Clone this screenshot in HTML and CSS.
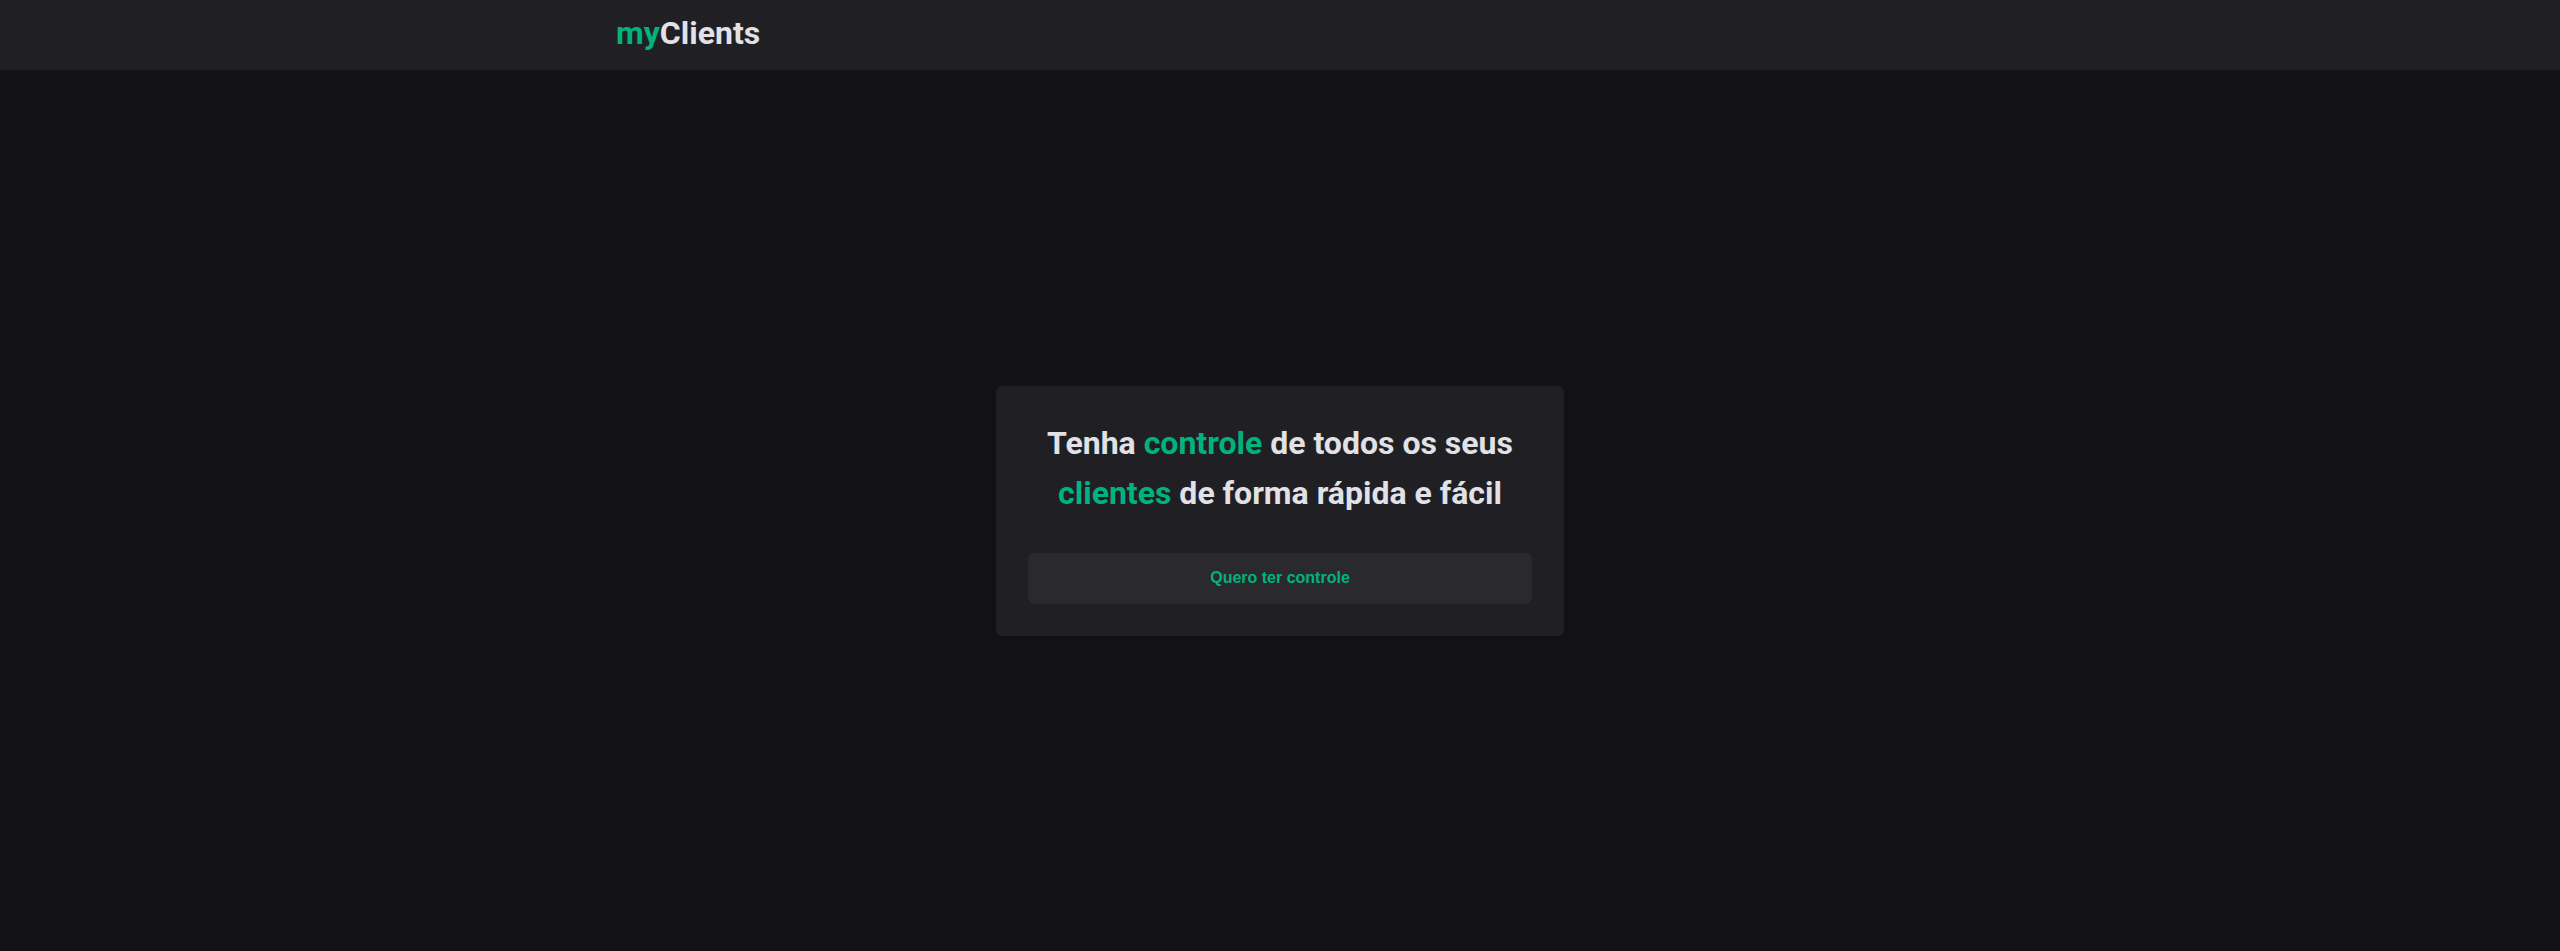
FILE: index.html
```html
<!DOCTYPE html>
<html lang="pt-BR">
<head>
<meta charset="utf-8">
<title>myClients</title>
<link rel="stylesheet" href="styles.css">
</head>
<body>
<header class="header">
  <div class="header-inner">
    <span class="logo"><span class="green">my</span>Clients</span>
  </div>
</header>
<main class="main">
  <section class="card">
    <h1 class="title">Tenha <span class="green">controle</span> de todos os seus <span class="green">clientes</span> de forma rápida e fácil</h1>
    <button class="cta">Quero ter controle</button>
  </section>
</main>
</body>
</html>
```
FILE: styles.css
```css
* { box-sizing: border-box; }
html, body { margin: 0; padding: 0; height: 100%; }
body {
  background: #121214;
  color: #e1e1e6;
  font-family: Roboto, "Liberation Sans", sans-serif;
  display: flex;
  flex-direction: column;
}
.green { color: #00b37e; }
.header {
  background: #202024;
  height: 70px;
  flex: none;
}
.header-inner {
  width: 1328px;
  margin: 0 auto;
  height: 100%;
  padding-bottom: 5px;
  display: flex;
  align-items: center;
}
.logo {
  font-size: 32px;
  font-weight: 700;
  color: #e1e1e6;
}
.main {
  flex: 1;
  display: flex;
  align-items: center;
  justify-content: center;
}
.card {
  width: 568px;
  background: #202024;
  border-radius: 6px;
  padding: 32px;
}
.title {
  margin: 0 0 35px;
  font-size: 32px;
  line-height: 50px;
  font-weight: 700;
  text-align: center;
}
.cta {
  display: block;
  width: 100%;
  height: 51px;
  border: 0;
  border-radius: 6px;
  background: #29292e;
  color: #00b37e;
  font-family: "Liberation Sans", Arial, sans-serif;
  font-weight: 700;
  font-size: 16px;
  cursor: pointer;
}
```
